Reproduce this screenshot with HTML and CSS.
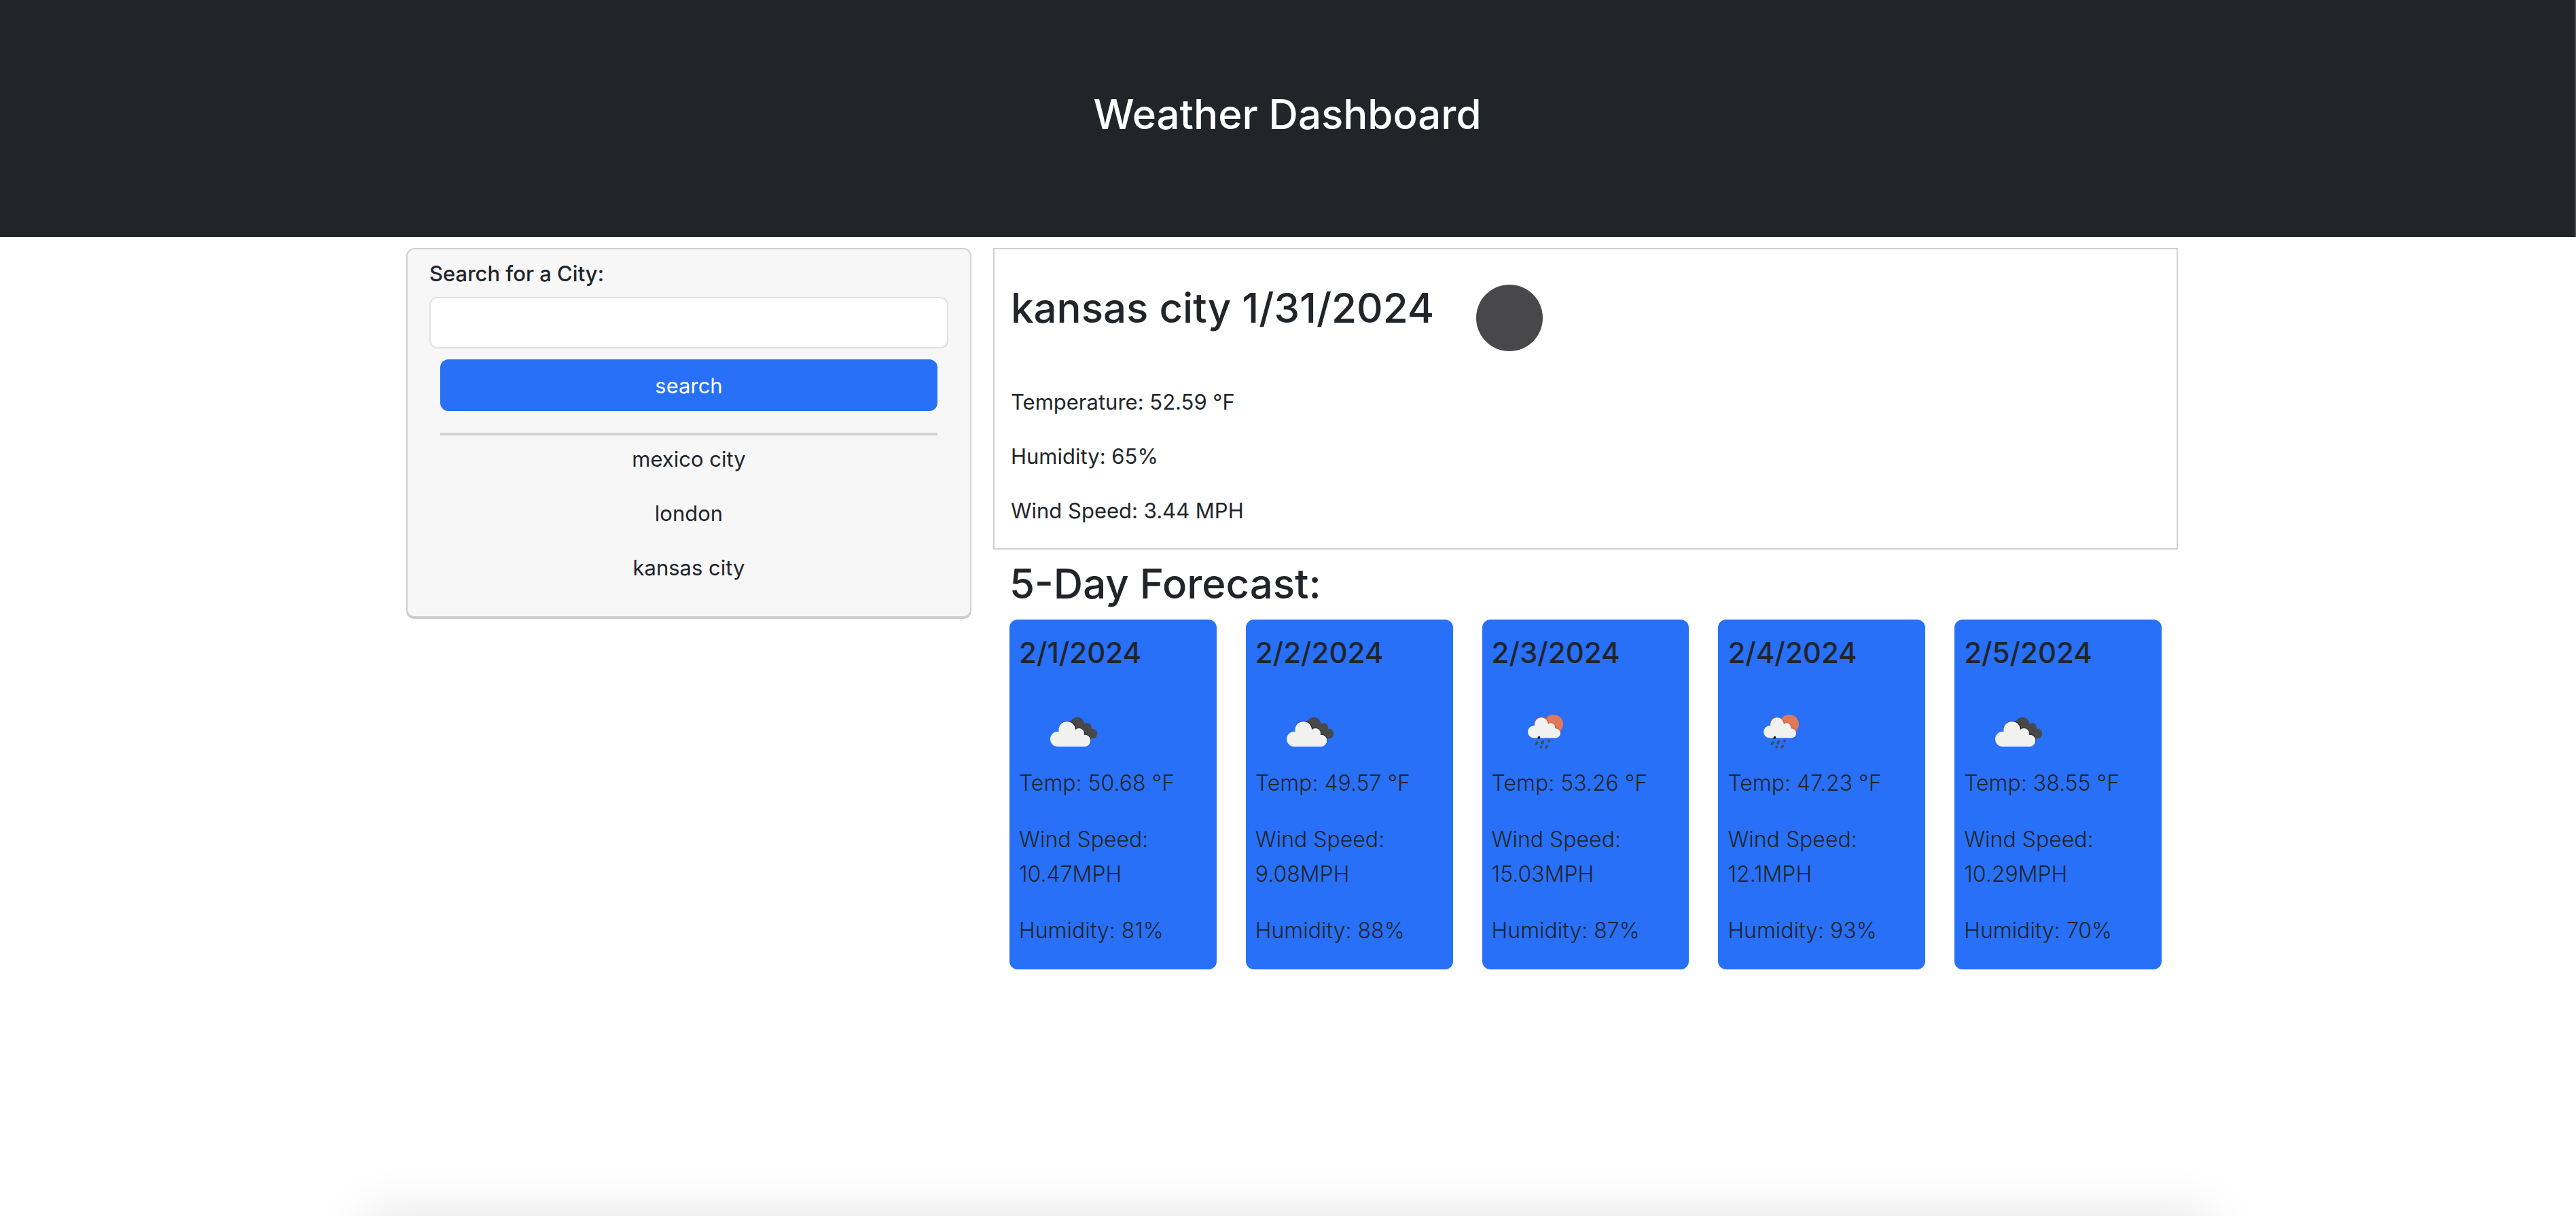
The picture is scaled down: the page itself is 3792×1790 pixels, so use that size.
FILE: index.html
```html
<!DOCTYPE html>
<html lang="en">
<head>
  <meta charset="utf-8">
  <meta name="viewport" content="width=device-width, initial-scale=1">
  <title>Weather Dashboard</title>
  <link rel="stylesheet" href="styles.css">
</head>
<body>
  <svg class="symbols" aria-hidden="true">
    <symbol id="cloudy" viewBox="0 0 360 270">
      <g fill="#48484a">
        <circle cx="198" cy="108" r="31"/>
        <circle cx="241" cy="123" r="20"/>
        <circle cx="264" cy="150" r="22"/>
        <path d="M180 110h65v30l15 32h-40z"/>
      </g>
      <g fill="#222224">
        <circle cx="154" cy="132" r="39"/>
        <circle cx="206" cy="148" r="24"/>
        <circle cx="232" cy="178" r="26"/>
      </g>
      <g fill="#f1f1f0">
        <circle cx="152" cy="133" r="37"/>
        <circle cx="205" cy="149" r="23"/>
        <circle cx="231" cy="180" r="25"/>
        <path d="M231 207H111a33 33 0 0 1 0-66h60l57 14z"/>
        <path d="M231 180h25a25 27 0 0 1-25 27z"/>
      </g>
    </symbol>
    <symbol id="rain" viewBox="-12 0 360 270">
      <circle cx="201" cy="108" r="42" fill="#e0785a"/>
      <g fill="#c9532f">
        <circle cx="148" cy="108" r="32"/>
        <circle cx="190" cy="121" r="20"/>
        <circle cx="210" cy="146" r="22"/>
      </g>
      <g fill="#f1f1f0">
        <circle cx="147" cy="109" r="30"/>
        <circle cx="189" cy="122" r="19"/>
        <circle cx="210" cy="148" r="21"/>
        <path d="M210 169H114a27 27 0 0 1 0-54h60l38 14z"/>
      </g>
      <g stroke="#48484a" stroke-width="10" stroke-linecap="round">
        <path stroke="#1d1d1e" d="M135 169l2-3"/>
        <path d="M124 196l4-7M150 192l4-7M179 182l2-1M144 209l2-1M168 211l4-6"/>
      </g>
    </symbol>
  </svg>

  <header class="banner">
    <h1>Weather Dashboard</h1>
  </header>

  <main class="dashboard">
    <aside class="search-card">
      <form class="search-form">
        <label for="city">Search for a City:</label>
        <input id="city" type="text">
        <button type="button">search</button>
      </form>
      <hr>
      <ul class="history">
        <li>mexico city</li>
        <li>london</li>
        <li>kansas city</li>
      </ul>
    </aside>

    <div class="results">
      <section class="current">
        <div class="current-head">
          <h2>kansas city 1/31/2024</h2>
          <svg class="sky" viewBox="0 0 98 98" role="img" aria-label="clear night"><circle cx="49" cy="49" r="49" fill="#48484a"/></svg>
        </div>
        <p>Temperature: 52.59 °F</p>
        <p>Humidity: 65%</p>
        <p>Wind Speed: 3.44 MPH</p>
      </section>

      <section class="forecast">
        <h2>5-Day Forecast:</h2>
        <div class="days">
          <article class="day">
            <h3>2/1/2024</h3>
            <svg class="icon" role="img" aria-label="broken clouds"><use href="#cloudy"/></svg>
            <p>Temp: 50.68 °F</p>
            <p>Wind Speed: 10.47MPH</p>
            <p>Humidity: 81%</p>
          </article>
          <article class="day">
            <h3>2/2/2024</h3>
            <svg class="icon" role="img" aria-label="broken clouds"><use href="#cloudy"/></svg>
            <p>Temp: 49.57 °F</p>
            <p>Wind Speed: 9.08MPH</p>
            <p>Humidity: 88%</p>
          </article>
          <article class="day">
            <h3>2/3/2024</h3>
            <svg class="icon" role="img" aria-label="rain"><use href="#rain"/></svg>
            <p>Temp: 53.26 °F</p>
            <p>Wind Speed: 15.03MPH</p>
            <p>Humidity: 87%</p>
          </article>
          <article class="day">
            <h3>2/4/2024</h3>
            <svg class="icon" role="img" aria-label="rain"><use href="#rain"/></svg>
            <p>Temp: 47.23 °F</p>
            <p>Wind Speed: 12.1MPH</p>
            <p>Humidity: 93%</p>
          </article>
          <article class="day">
            <h3>2/5/2024</h3>
            <svg class="icon" role="img" aria-label="broken clouds"><use href="#cloudy"/></svg>
            <p>Temp: 38.55 °F</p>
            <p>Wind Speed: 10.29MPH</p>
            <p>Humidity: 70%</p>
          </article>
        </div>
      </section>
    </div>
  </main>
  <div class="bottom-shade"></div>
</body>
</html>
```
FILE: styles.css
```css
* {
  box-sizing: border-box;
}

body {
  margin: 0;
  background: #fff;
  color: #212529;
  font-family: Inter, "Liberation Sans", sans-serif;
  font-size: 31px;
  line-height: 48px;
}

h1,
h2,
h3,
p,
ul {
  margin: 0;
}

h1,
h2 {
  font-size: 60px;
  font-weight: 500;
  line-height: 76px;
}

.symbols {
  display: none;
}

.banner {
  padding: 130px 0 143px;
  border-right: 2px solid #4b4e52;
  background: #212529;
  color: #fff;
  text-align: center;
}

.dashboard {
  display: grid;
  grid-template-columns: 832fr 1744fr;
  align-items: start;
  gap: 32px;
  max-width: 2640px;
  margin: 0 auto;
  padding: 16px 10px 16px 22px;
}

.search-card {
  padding: 12px 32px 47px;
  border: 2px solid #d1d1d1;
  border-radius: 12px;
  background: #f7f7f7;
  box-shadow: 0 2px 0 #cacaca;
}

.search-form {
  display: flex;
  flex-direction: column;
}

.search-form label {
  font-weight: 500;
}

.search-form input,
.search-form button {
  height: 76px;
  border-radius: 12px;
  font: inherit;
}

.search-form input {
  margin-top: 10px;
  padding: 12px 24px;
  border: 2px solid #dee2e6;
  background: #fff;
}

.search-form button {
  margin: 16px 16px 0;
  padding: 2px 0 0;
  border: 0;
  background: #2770f7;
  color: #fff;
}

hr {
  height: 4px;
  margin: 32px 16px 11px;
  border: 0;
  background: #d1d1d1;
}

.history {
  display: grid;
  gap: 32px;
  padding: 0;
  list-style: none;
  text-align: center;
}

.current {
  padding: 48px 24px 31px;
  border: 2px solid #d1d1d1;
}

.current-head {
  display: flex;
  gap: 62px;
  height: 153px;
}

.sky {
  width: 98px;
  height: 98px;
  margin-top: 4px;
}

.current p + p {
  margin-top: 32px;
}

.forecast {
  padding: 12px 24px 0;
}

.days {
  display: grid;
  grid-template-columns: repeat(5, 1fr);
  gap: 43px;
  margin-top: 15px;
}

.day {
  padding: 20px 14px 0;
  border-radius: 12px;
  background: #2770f7;
}

.day h3 {
  font-size: 42px;
  font-weight: 500;
  line-height: 58px;
}

.icon {
  display: block;
  width: 120px;
  height: 90px;
  margin: 40px 20px 7px;
}

.day p {
  margin-bottom: 32px;
  font-size: 32px;
  font-weight: 300;
  line-height: 51px;
}

.bottom-shade {
  position: fixed;
  top: 100%;
  right: 540px;
  left: 540px;
  height: 200px;
  box-shadow: 0 0 80px rgba(0, 0, 0, 0.12);
}
```
